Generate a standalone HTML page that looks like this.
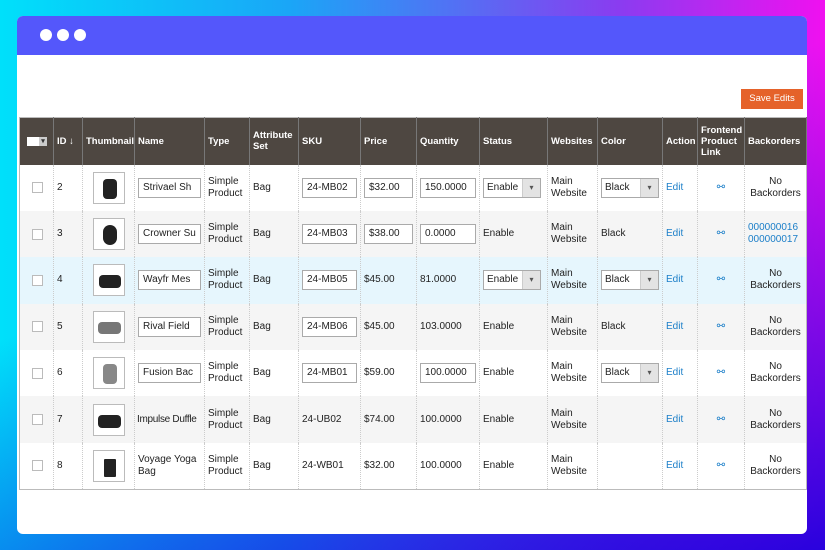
<!DOCTYPE html>
<html><head><meta charset="utf-8"><style>
*{box-sizing:border-box;margin:0;padding:0}
body{width:825px;height:550px;overflow:hidden;position:relative;font-family:"Liberation Sans",sans-serif;font-size:10px;color:#222;
background:linear-gradient(160deg,rgba(0,0,0,0) 40%,rgba(20,0,220,.9) 100%),linear-gradient(90deg,#00e0fa 0%,#1aa6f7 35%,#8a3cf0 75%,#f010f0 100%);}
.win{position:absolute;left:17px;top:16px;width:790px;height:518px;background:#fff;border-radius:6px;overflow:hidden}
.bar{height:39px;background:#5457fb;position:relative}
.dot{position:absolute;top:13px;width:12px;height:12px;border-radius:50%;background:#fff}
.save{position:absolute;left:724px;top:73px;width:62px;height:20px;background:#e5622a;color:#fff;font-size:9.5px;line-height:20px;text-align:center}
table{position:absolute;left:2px;top:101px;border-collapse:collapse;table-layout:fixed;width:787px;border:1px solid #bbb}
th{background:#4e4741;color:#fff;font-weight:bold;text-align:left;padding:0 3px;height:47px;border-right:1px solid #777;line-height:11px;font-size:9.5px}
td{height:46.4px;padding:0 3px;border-right:1px dotted #ccc;line-height:12px;vertical-align:middle}
tr.g td{background:#f5f5f5}tr.b td{background:#e6f6fd}
.cb{width:11px;height:11px;border:1px solid #bbb;background:#fff;margin-left:9px}
.th{width:32px;height:32px;border:1px solid #bbb;background:#fff;margin:0 auto;position:relative}
.th i{position:absolute;left:9px;top:6px;width:14px;height:20px;background:#222;border-radius:4px}
.in{border:1px solid #aaa;height:20px;line-height:18px;padding:0 4px;background:#fff;overflow:hidden;white-space:nowrap}
.sel{border:1px solid #aaa;height:20px;line-height:18px;padding-left:3px;background:#fff;position:relative;width:58px}
.sel:after{content:"▾";position:absolute;right:0;top:0;width:17px;height:18px;background:#e3e3e3;text-align:center;font-size:8px;color:#555;border-left:1px solid #ccc}
a{color:#1a7ec8;text-decoration:none}
.c{text-align:center}
</style></head><body>
<div class="win">
<div class="bar"><div class="dot" style="left:23px"></div><div class="dot" style="left:40px"></div><div class="dot" style="left:57px"></div></div>
<div class="save">Save Edits</div>
<table>
<colgroup><col style="width:34px"><col style="width:29px"><col style="width:52px"><col style="width:70px"><col style="width:45px"><col style="width:49px"><col style="width:62px"><col style="width:56px"><col style="width:63px"><col style="width:68px"><col style="width:50px"><col style="width:65px"><col style="width:35px"><col style="width:47px"><col style="width:62px"></colgroup>
<tr><th><div style="width:20px;height:9px;background:#fff;margin-left:4px;position:relative"><span style="position:absolute;right:0;top:0;width:8px;height:9px;background:#ccc;color:#333;font-size:7px;text-align:center;line-height:9px">▾</span></div></th><th>ID ↓</th><th>Thumbnail</th><th>Name</th><th>Type</th><th>Attribute Set</th><th>SKU</th><th>Price</th><th>Quantity</th><th>Status</th><th>Websites</th><th>Color</th><th>Action</th><th>Frontend Product Link</th><th>Backorders</th></tr>
<tr><td><div class="cb"></div></td><td>2</td><td><div class="th"><i></i></div></td><td><div class="in">Strivael Sh</div></td><td>Simple Product</td><td>Bag</td><td><div class="in">24-MB02</div></td><td><div class="in">$32.00</div></td><td><div class="in">150.0000</div></td><td><div class="sel">Enable</div></td><td>Main Website</td><td><div class="sel">Black</div></td><td><a>Edit</a></td><td class="c"><a>⚯</a></td><td class="c">No Backorders</td></tr>
<tr class="g"><td><div class="cb"></div></td><td>3</td><td><div class="th"><i style="border-radius:7px"></i></div></td><td><div class="in">Crowner Su</div></td><td>Simple Product</td><td>Bag</td><td><div class="in">24-MB03</div></td><td><div class="in">$38.00</div></td><td><div class="in">0.0000</div></td><td>Enable</td><td>Main Website</td><td>Black</td><td><a>Edit</a></td><td class="c"><a>⚯</a></td><td><a>000000016 000000017</a></td></tr>
<tr class="b"><td><div class="cb"></div></td><td>4</td><td><div class="th"><i style="left:5px;top:10px;width:22px;height:13px"></i></div></td><td><div class="in">Wayfr Mes</div></td><td>Simple Product</td><td>Bag</td><td><div class="in">24-MB05</div></td><td>$45.00</td><td>81.0000</td><td><div class="sel">Enable</div></td><td>Main Website</td><td><div class="sel">Black</div></td><td><a>Edit</a></td><td class="c"><a>⚯</a></td><td class="c">No Backorders</td></tr>
<tr class="g"><td><div class="cb"></div></td><td>5</td><td><div class="th"><i style="left:4px;top:10px;width:23px;height:12px;background:#777"></i></div></td><td><div class="in">Rival Field</div></td><td>Simple Product</td><td>Bag</td><td><div class="in">24-MB06</div></td><td>$45.00</td><td>103.0000</td><td>Enable</td><td>Main Website</td><td>Black</td><td><a>Edit</a></td><td class="c"><a>⚯</a></td><td class="c">No Backorders</td></tr>
<tr><td><div class="cb"></div></td><td>6</td><td><div class="th"><i style="background:#888"></i></div></td><td><div class="in">Fusion Bac</div></td><td>Simple Product</td><td>Bag</td><td><div class="in">24-MB01</div></td><td>$59.00</td><td><div class="in">100.0000</div></td><td>Enable</td><td>Main Website</td><td><div class="sel">Black</div></td><td><a>Edit</a></td><td class="c"><a>⚯</a></td><td class="c">No Backorders</td></tr>
<tr class="g"><td><div class="cb"></div></td><td>7</td><td><div class="th"><i style="left:4px;top:10px;width:23px;height:13px"></i></div></td><td style="white-space:nowrap;letter-spacing:-0.3px;padding:0 2px">Impulse Duffle</td><td>Simple Product</td><td>Bag</td><td>24-UB02</td><td>$74.00</td><td>100.0000</td><td>Enable</td><td>Main Website</td><td></td><td><a>Edit</a></td><td class="c"><a>⚯</a></td><td class="c">No Backorders</td></tr>
<tr><td><div class="cb"></div></td><td>8</td><td><div class="th"><i style="left:10px;top:8px;width:12px;height:18px;border-radius:1px"></i></div></td><td>Voyage Yoga Bag</td><td>Simple Product</td><td>Bag</td><td>24-WB01</td><td>$32.00</td><td>100.0000</td><td>Enable</td><td>Main Website</td><td></td><td><a>Edit</a></td><td class="c"><a>⚯</a></td><td class="c">No Backorders</td></tr>
</table>
</div>
</body></html>
